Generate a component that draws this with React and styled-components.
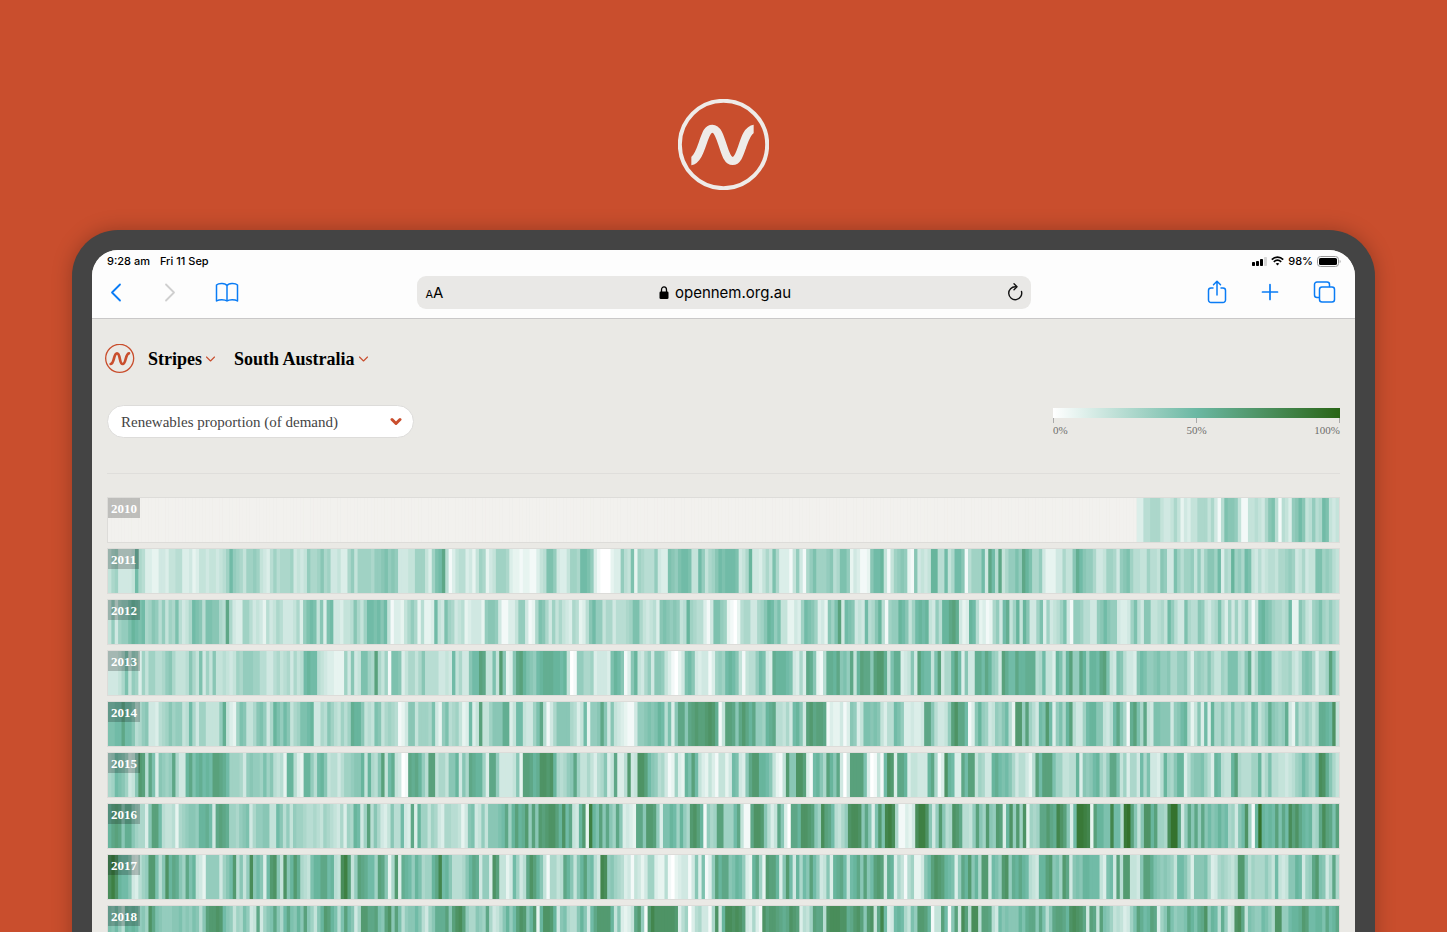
import React from "react";
import styled, { createGlobalStyle } from "styled-components";

const GlobalStyle = createGlobalStyle`
  *, *::before, *::after { box-sizing: border-box; }
  body { margin: 0; background: #c94e2d; }
  button, select, input { font: inherit; color: inherit; margin: 0; }
`;

const sans = `Inter, "Liberation Sans", sans-serif`;
const serif = `"Liberation Serif", serif`;
const brand = "#c94e2d";
const blue = "#0a7cf5";

/* Daily renewables share, one string per month. a = 0%, each letter adds 4%, "-" = no data. */
const none = (n) => "-".repeat(n);
const YEARS = [
  { year: 2010, months: [none(31), none(28), none(31), none(30), none(31), none(30), none(31), none(31), none(30), none(31),
    "-ddgghhhfeefhfcedffhhhfhebglkk", "jfbbffgfehklgbgfdjkmkfgjghmlfef"] },
  { year: 2011, months: ["fhieeeefmhgddcceedffggddecdffef", "fefgimjihfiijifedgighhhiefef", "jhhikhieefddhjfiiiihjjkljkjeeef",
    "fiiifdilmpgbdfggdecfihcefiiihd", "ccbccbbdfglljeddfiihmmljdbaaacd", "djgflcihgggjeddlkjlmmlffmjfhik",
    "mlmmmlefhneedfhflhdddbfjebhjlii", "ijkghlljcedbbckmmnfbfijkjcbkefe", "fnnggmfhmmkbgiiimepmgpfhjjljpn",
    "lhhjeccceehffkomkjjheefiihejkli", "ggffiggfkjeeligiijfjfikkimdhgn", "ijhmlfegefggfhhijiefheffllijigf"] },
  { year: 2012, months: ["fjeijjlnmlmhikjgjfihlgefhmlkgll", "kkhgpheddiigefecgefhgeeefhdjl", "mlfkdlmeedffgkhfimmlmkmfbddcfhj",
    "hcgccdmfelihefgcdeeecjkkjebbdd", "fjjebchlkheifhfedhgcdgkmjjfhheg", "gghillhfefgdklkjkjfgnihggdbell",
    "jicbacghheehiknmjlffccedimlkide", "ckilqemlkefemghkngbijjnmkfimnmn", "fejgnnpqoecdnmgcdbchjemofinfnk",
    "eeildiefgilebjjiggeejkmkjjeddei", "lgekkffghfmjgeelhggkjfeghlgdie", "iegkfbfmnlkihhghmcckifeijlihjhg"] },
  { year: 2013, months: ["eeefhlfjidifiigghjkhfffgkhfleif", "kffgfefihjjjiiggeeghfghehfgm", "nmmgfeddccciekefllihqhfibllkdfh",
    "hfhkggggeefemfheekmmqpfflfrkcd", "kpqnlkjmnooonnmnfabjjhhideeedln", "mkbdknfehjekkjfdbacelmkedeebdi",
    "jimnmkfbfggjmledonnnmledhdpokcb", "goonpkljpfnqppkqrrofloodefkeqnm", "mflqehhnqmdkeeoompnjieqommpnno",
    "ooghmffdnlgnqjjpninnmpqlfelkgee", "dkmljjkljjkhhjjkgdijihkhffihll", "lhgkoehmnmmgfghhifegklkhdggiqlg"] },
  { year: 2014, months: ["llmmpmmkghjkeedghikijjfgmheiiff", "ffjofdcilkffhkljehnljmkfhill", "mneehgkigfigionnkfgflkfhihgbcek",
    "kfiiihlecjlghifcdmdfqffikkkood", "fmmfeeilpgbehkkkkhgdfmcjjkpkekf", "edcbbejjklklnmgldkppkpqrqqrsro",
    "bfqqpkprpnpjjinopggfhemnkeqrpqq", "pbdccebdkjdfllklkfdggmljddeddep", "pkgeefjqsppmbdknjiefjikmgcrrjq",
    "igemlrmdjlhnqgeeimnnkkfegmpkhbo", "qlhpfellkkkejkmngcfkdmdnhhkhgl", "hhjgfnlfhjokjijoeckghjhfhoonmsf"] },
  { year: 2015, months: ["himlkiefkrqgpldkjijpheenplnomnm", "qqpomiiihejkjjilikgfgcnngdcn", "njgmnkfggegiijkknfnhgkqfmofeabp",
    "opnjgqqfhhfkknekhponnidppjeeee", "fkcqqpnossrsnhghjkpiffhfdghkdfp", "ddgrefssqmkjghebcidcnlqmfdcfdb",
    "ffcemledkprrnnmkfcbfrkkssqdbmnk", "hqnkpeaeqqqqldabfbmsrdppndffeee", "nphbdsnmddpmqqfiheenomlmkhegge",
    "cgqmqqqliiffggndkjkmnigjpplfidh", "hemhleedgnihknndgjkkligdnmgffn", "qhgggiinfhlggffefgijmkihmtsokhf"] },
  { year: 2016, months: ["npqpkookihhdkqqmgffgchijkkjnnom", "epqpoiihjklehjjkkffmkgjfjiihg", "ghgfihgfehdihnmeiqgkhedfkggmedp",
    "dniifihedhhggfceklefjfkkklmpin", "qnorjqkrqrssqnsmpfenrcvnlqkpkip", "kdedcppkrrqjdllnminjhrsqnbjhiq",
    "qiiimpfbbpssrkgdfpkdappnssrqkit", "qpmgfhjsttskpkdlrluvthbbdcetvvs", "kejrkghsrpggfjqkirkjrqdnsjrisc",
    "ihipprpousqkdmwwvucqnnllummgwxq", "kfkssnqiihtxxpejpkpjpkmklnlmhi", "ekmsibnxnmnmqlpmtqspnmnhiptqplq"] },
  { year: 2017, months: ["tvsnmmkedgijrrlgksnpokiplnfecjj", "jjeikmrgkfjtkmkdmrskfsknrohg", "flnnppmngftvqfjqpommiqpkchrdonm",
    "jnlhiinpumnkggghknpoejjdsqffce", "miegpsqnkfbhhfgpnkfknqlmgeutjki", "hgdebfeceiidccgbacdeebekdlbdjq",
    "nppklnmjdcnpicrqqndkrmenhmkqmje", "fkdnopmfmnpkqkmqrqeondhfbgiccek", "mqsrqnmldjpnrknhrremljrsjonpnm",
    "gfennqrklirpeklknnmmmfdlmeqgrrf", "fekqqolkjkjifmmkhdkkklhdehihgf", "hrrkgihhhjhfmfefkknmeijprlkehph"] },
  { year: 2018, months: ["lkmjgnmnmjkisplkjjjkkljkjlkgkqr", "rsrmkjfihljefpeiklpkhmplknkq", "kifknrqnlglqmkehrrppqlkqskqlgjk",
    "kmkgeikoooqkqstqjhhkjiphefhknj", "mqsrknrcnssrneklhggknkemprrrrnf", "kdcdfprjbrussssssrdgiadgheebhs",
    "enttstsqedhdbsqrrqpopsrqdgfiqpp", "gstttssoprsqkrsfpumdemnmhfljrrq", "nbffqmbkqetqgttgqqpgemklkkknlo",
    "ppkplgkpqqpnstsrpeqpfqlkifgfdei", "lqomnqpdikpljkklpnlopsknmgojef", "stpflkjjmljhssjjmnnorqmmnnlpmnp"] },
];

const STOPS = [[255, 255, 255], [107, 184, 163], [41, 101, 22]];
function shade(letter) {
  if (letter === "-") return "#f2f1ee";
  const v = (letter.charCodeAt(0) - 97) * 0.08;
  const k = v < 1 ? 0 : 1;
  const t = v - k;
  const mix = STOPS[k].map((c, i) => Math.round(c + (STOPS[k + 1][i] - c) * t));
  return `rgb(${mix.join(",")})`;
}

const Page = styled.main`
  height: 100vh;
  overflow: hidden;
  display: flex;
  flex-direction: column;
  align-items: stretch;
  background: ${brand};
`;
const Hero = styled.header`
  flex: none;
  display: flex;
  justify-content: center;
  padding: 99px 0 40px;
`;
const HeroLogo = styled.svg`
  display: block;
  width: 91px;
  height: 91px;
`;
const Device = styled.section`
  flex: 1 0 auto;
  margin: 0 72px;
  padding: 20px 20px 0;
  background: #444;
  border-radius: 46px 46px 0 0;
  box-shadow: 0 0 20px rgba(0, 0, 0, 0.25);
`;
const Screen = styled.div`
  overflow: hidden;
  border-radius: 26px 26px 0 0;
  background: #eae9e5;
`;
const Browser = styled.div`
  background: #fdfdfd;
  border-bottom: 1px solid #c9c8c8;
  font-family: ${sans};
  color: #000;
`;
const StatusBar = styled.div`
  display: flex;
  justify-content: space-between;
  align-items: center;
  height: 22px;
  padding: 0 14px 0 15px;
  font-size: 11px;
  font-weight: 500;
`;
const StatusGroup = styled.div`
  display: flex;
  align-items: center;
  gap: ${(p) => p.$gap}px;
  svg { display: block; }
`;
const Toolbar = styled.div`
  display: grid;
  grid-template-columns: 1fr minmax(0, 614px) 1fr;
  align-items: center;
  height: 46px;
  padding: 0 15px 6px;
`;
const ToolGroup = styled.div`
  display: flex;
  gap: 30px;
  justify-content: ${(p) => (p.$end ? "flex-end" : "flex-start")};
  margin: 0 ${(p) => (p.$end ? "4px" : "0")} 0 ${(p) => (p.$end ? "0" : "-3px")};
`;
const IconButton = styled.button`
  display: block;
  padding: 0;
  border: 0;
  background: none;
  color: ${(p) => p.$color || blue};
  svg { display: block; }
`;
const AddressBar = styled.div`
  display: grid;
  grid-template-columns: 24px 1fr 24px;
  align-items: center;
  height: 33px;
  padding: 0 6px 0 9px;
  border-radius: 9px;
  background: #e9e8e6;
  ${IconButton} { justify-self: end; }
`;
const TextSize = styled.button`
  padding: 0;
  border: 0;
  background: none;
  font-size: 15px;
  text-align: left;
  white-space: nowrap;
  small { font-size: 11px; }
`;
const Address = styled.div`
  display: flex;
  align-items: center;
  justify-content: center;
  gap: 6px;
  font-size: 15px;
`;
const Content = styled.div`
  padding: 25px 15px 20px;
`;
const Nav = styled.nav`
  display: flex;
  align-items: center;
  height: 30px;
  margin-left: -2px;
`;
const Home = styled.a`
  display: block;
  margin-right: 13px;
  svg { display: block; width: 30px; height: 30px; }
`;
const NavButton = styled.button`
  display: flex;
  align-items: center;
  gap: 3px;
  margin-right: 18px;
  padding: 0;
  border: 0;
  background: none;
  color: #000;
  font-family: ${serif};
  font-size: 18px;
  font-weight: 700;
  line-height: 24px;
  svg { display: block; color: ${brand}; }
`;
const Controls = styled.div`
  display: flex;
  justify-content: space-between;
  align-items: flex-start;
  margin-top: 31px;
  padding-bottom: 35px;
  border-bottom: 1px solid #dfdedb;
`;
const SelectWrap = styled.label`
  position: relative;
  display: block;
  svg { position: absolute; right: 12px; top: 12px; color: ${brand}; pointer-events: none; }
`;
const Select = styled.select`
  appearance: none;
  display: block;
  width: 307px;
  height: 33px;
  padding: 0 36px 0 13px;
  border: 1px solid #dddcda;
  border-radius: 17px;
  background: #fff;
  color: #444;
  font-family: ${serif};
  font-size: 15px;
`;
const Legend = styled.div`
  width: 287px;
  margin-top: 3px;
`;
const Gradient = styled.div`
  height: 10px;
  background: linear-gradient(90deg, #fff, #6bb8a3 50%, #296516);
`;
const Ticks = styled.div`
  display: flex;
  justify-content: space-between;
  height: 5px;
`;
const Tick = styled.i`
  width: 1px;
  background: #aaa;
`;
const LegendLabels = styled.div`
  display: grid;
  grid-template-columns: repeat(3, 1fr);
  color: #6e6e6c;
  font-family: ${serif};
  font-size: 11px;
  line-height: 14px;
  span:nth-child(2) { text-align: center; }
  span:nth-child(3) { text-align: right; }
`;
const Rows = styled.div`
  display: flex;
  flex-direction: column;
  gap: 5px;
  margin-top: 23px;
`;
const Row = styled.figure`
  position: relative;
  height: 46px;
  margin: 0;
  border: 1px solid #dddcd9;
`;
const Stripes = styled.svg`
  display: block;
  width: 100%;
  height: 100%;
`;
const YearLabel = styled.figcaption`
  position: absolute;
  left: 0;
  top: 0;
  height: 20px;
  padding: 0 3px;
  background: rgba(0, 0, 0, 0.21);
  color: #fff;
  font-family: ${serif};
  font-size: 13px;
  font-weight: 700;
  line-height: 21px;
`;

function YearRow({ year, months }) {
  const days = months.join("");
  return (
    <Row>
      <Stripes viewBox={`0 0 ${days.length} 1`} preserveAspectRatio="none" aria-hidden="true">
        {[...days].map((d, i) => (
          <rect key={i} x={i} y="0" width={d === "-" ? 1 : Math.min(1.3, days.length - i)} height="1" fill={shade(d)} />
        ))}
      </Stripes>
      <YearLabel>{year}</YearLabel>
    </Row>
  );
}

const Svg = ({ w, h, sw = 1.5, children }) => (
  <svg width={w} height={h} viewBox={`0 0 ${w} ${h}`} fill="none" stroke="currentColor" strokeWidth={sw} strokeLinecap="round" strokeLinejoin="round" aria-hidden="true">
    {children}
  </svg>
);

const Caret = () => (
  <Svg w={11} h={8} sw={1.1}><path d="M1.500 2L5.500 6L9.500 2" stroke={brand} /></Svg>
);

export default function App() {
  return (
    <>
      <GlobalStyle />
      <Page>
        <Hero>
          <HeroLogo viewBox="0 0 273 273" fill="none" stroke="#eeebe8" role="img" aria-label="OpenNEM">
            <clipPath id="wave"><rect x="40" y="70" width="187" height="140" /></clipPath>
            <circle cx="136.500" cy="136.500" r="131" strokeWidth="12" />
            <path clipPath="url(#wave)" strokeWidth="24" d="M20 187H38C58 184 68 150 76 127C84 105 88 89 103 89C118 89 125 110 134 138C143 166 149 186 164 186C179 186 185 165 193 142C201 118 209 92 229 89H247" />
          </HeroLogo>
        </Hero>
        <Device>
          <Screen>
            <Browser>
              <StatusBar>
                <StatusGroup $gap={10}><span>9:28 am</span><span>Fri 11 Sep</span></StatusGroup>
                <StatusGroup $gap={4}>
                  <svg width="15" height="9" viewBox="0 0 15 9" aria-hidden="true">
                    <rect x="0" y="5" width="3" height="4" rx="0.8" />
                    <rect x="4" y="4" width="3" height="5" rx="0.8" />
                    <rect x="8" y="2" width="3" height="7" rx="0.8" />
                    <rect x="12" y="0" width="3" height="9" rx="0.8" fill="#d5d5d5" />
                  </svg>
                  <svg width="13" height="10" viewBox="0 0 13 10" fill="none" stroke="#000" strokeWidth="1.7" aria-hidden="true">
                    <path d="M0.800 3.700C4 0.300 9 0.300 12.200 3.700" />
                    <path d="M2.800 5.900C5 3.800 8 3.800 10.200 5.900" />
                    <path d="M6.500 9.500L4.700 7.600C5.700 6.700 7.300 6.700 8.300 7.600Z" fill="#000" stroke="none" />
                  </svg>
                  <span>98%</span>
                  <svg width="24" height="11" viewBox="0 0 24 11" aria-hidden="true">
                    <rect x="0.500" y="0.500" width="21" height="10" rx="3" fill="none" stroke="#999" />
                    <rect x="2" y="2" width="18" height="7" rx="1.600" />
                    <path d="M22.700 4v3c1.200-.4 1.200-2.600 0-3z" fill="#999" />
                  </svg>
                </StatusGroup>
              </StatusBar>
              <Toolbar>
                <ToolGroup>
                  <IconButton aria-label="Back"><Svg w={24} h={24} sw={1.8}><path d="M16 4.500L8 12.500L16 20.500" /></Svg></IconButton>
                  <IconButton aria-label="Forward" $color="#cfcfcf"><Svg w={24} h={24} sw={1.8}><path d="M8 4.500L16 12.500L8 20.500" /></Svg></IconButton>
                  <IconButton aria-label="Bookmarks">
                    <Svg w={28} h={24}>
                      <path d="M15 5.500C13.500 3 7 2.600 4.500 5V21C7 19.200 13 19.200 15 21C17 19.200 23 19.200 25.500 21V5C23 2.600 16.500 3 15 5.500V21" />
                    </Svg>
                  </IconButton>
                </ToolGroup>
                <AddressBar>
                  <TextSize aria-label="Text size"><small>A</small>A</TextSize>
                  <Address>
                    <svg width="10" height="13" viewBox="0 0 10 13" aria-hidden="true">
                      <rect x="0.500" y="5.500" width="9" height="7.500" rx="1.300" />
                      <path d="M2.500 6V3.800C2.500 0 7.500 0 7.500 3.800V6" fill="none" stroke="#000" strokeWidth="1.300" />
                    </svg>
                    <span>opennem.org.au</span>
                  </Address>
                  <IconButton aria-label="Reload" $color="#111">
                    <Svg w={20} h={20} sw={1.4}>
                      <path d="M16.500 9.500A6.500 6.500 0 1 1 10.500 4.700" />
                      <path d="M9 1.800L12 4.800L9 7.800" />
                    </Svg>
                  </IconButton>
                </AddressBar>
                <ToolGroup $end>
                  <IconButton aria-label="Share">
                    <Svg w={22} h={26}>
                      <path d="M7 9H5A2.500 2.500 0 0 0 2.500 11.500V21A2.500 2.500 0 0 0 5 23.500H17A2.500 2.500 0 0 0 19.500 21V11.500A2.500 2.500 0 0 0 17 9H15" />
                      <path d="M11 16V2.500M7.500 5.800L11 2.300L14.500 5.800" />
                    </Svg>
                  </IconButton>
                  <IconButton aria-label="New tab"><Svg w={24} h={26} sw={1.7}><path d="M12 5.500V20.500M4.500 13H19.500" /></Svg></IconButton>
                  <IconButton aria-label="Tabs">
                    <Svg w={24} h={26}>
                      <rect x="7.500" y="8" width="15" height="15" rx="2.500" />
                      <path d="M7 18.500H5A2.500 2.500 0 0 1 2.500 16V5.500A2.500 2.500 0 0 1 5 3H15A2.500 2.500 0 0 1 17.500 5.500V7.500" />
                    </Svg>
                  </IconButton>
                </ToolGroup>
              </Toolbar>
            </Browser>
            <Content>
              <Nav>
                <Home href="#" aria-label="Home">
                  <svg viewBox="0 0 90 90" fill="none" stroke={brand} strokeLinecap="round" aria-hidden="true">
                    <circle cx="44" cy="43" r="42" strokeWidth="4" />
                    <path strokeWidth="8" d="M17 60C29 58 25 28 36 28C47 28 42 60 53 60C64 60 60 30 72 28" />
                  </svg>
                </Home>
                <NavButton>Stripes<Caret /></NavButton>
                <NavButton>South Australia<Caret /></NavButton>
              </Nav>
              <Controls>
                <SelectWrap>
                  <Select aria-label="Metric" defaultValue="demand">
                    <option value="demand">Renewables proportion (of demand)</option>
                  </Select>
                  <Svg w={12} h={9} sw={3}><path d="M2 2.500L6 6.500L10 2.500" /></Svg>
                </SelectWrap>
                <Legend>
                  <Gradient />
                  <Ticks><Tick /><Tick /><Tick /></Ticks>
                  <LegendLabels><span>0%</span><span>50%</span><span>100%</span></LegendLabels>
                </Legend>
              </Controls>
              <Rows>
                {YEARS.map((y) => <YearRow key={y.year} {...y} />)}
              </Rows>
            </Content>
          </Screen>
        </Device>
      </Page>
    </>
  );
}
